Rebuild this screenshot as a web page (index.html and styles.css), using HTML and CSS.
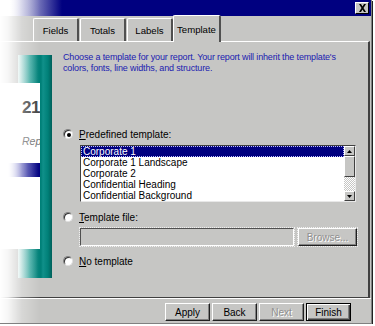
FILE: index.html
```html
<!DOCTYPE html>
<html>
<head>
<meta charset="utf-8">
<link rel="stylesheet" href="styles.css">
</head>
<body>
<div class="window">
  <div class="titlebar"><span class="close"><svg width="9" height="8" viewBox="0 0 9 8"><path d="M1 0h2l1.5 2.5L6 0h2L5.5 4 8 8H6L4.5 5.5 3 8H1l2.5-4z" fill="#000"/></svg></span></div>
  <div class="tabstrip">
    <div class="tab">Fields</div>
    <div class="tab">Totals</div>
    <div class="tab">Labels</div>
    <div class="tab active">Template</div>
  </div>
  <div class="panel">
    <div class="art">
      <div class="teal"></div>
      <div class="card">
        <div class="num">21</div>
        <div class="rep">Rep</div>
        <div class="bar"></div>
      </div>
    </div>
    <div class="content">
      <p class="desc">Choose a template for your report. Your report will inherit the template's<br>colors, fonts, line widths, and structure.</p>
      <div class="radio first"><span class="dot checked"></span><span class="lbl"><u>P</u>redefined template:</span></div>
      <div class="listbox">
        <div class="items">
          <div class="item sel">Corporate 1</div>
          <div class="item">Corporate 1 Landscape</div>
          <div class="item">Corporate 2</div>
          <div class="item">Confidential Heading</div>
          <div class="item">Confidential Background</div>
        </div>
        <div class="scroll">
          <div class="sbtn"><svg width="5" height="3" viewBox="0 0 5 3"><path d="M2.5 0L5 3H0z" fill="#000"/></svg></div>
          <div class="thumb"></div>
          <div class="track"></div>
          <div class="sbtn"><svg width="5" height="3" viewBox="0 0 5 3"><path d="M0 0h5L2.5 3z" fill="#000"/></svg></div>
        </div>
      </div>
      <div class="radio"><span class="dot"></span><span class="lbl"><u>T</u>emplate file:</span></div>
      <div class="filerow">
        <div class="field"></div>
        <div class="btn disabled browse">Browse...</div>
      </div>
      <div class="radio"><span class="dot"></span><span class="lbl"><u>N</u>o template</span></div>
    </div>
  </div>
  <div class="footer">
    <div class="btn">Apply</div>
    <div class="btn">Back</div>
    <div class="btn disabled">Next</div>
    <div class="btn default">Finish</div>
  </div>
  <div class="fade"></div>
</div>
</body>
</html>
```
FILE: styles.css
```css
html, body {
  margin: 0;
  padding: 0;
  background: #ffffff;
}
body {
  font-family: "Liberation Sans", Arial, sans-serif;
  font-size: 10px;
  color: #000;
}
.window {
  position: relative;
  width: 371px;
  height: 323px;
  background: #c6c6c4;
  border-right: 1px solid #808080;
  border-bottom: 1px solid #808080;
  box-shadow: 1px 1px 0 #202020;
  overflow: hidden;
}
.titlebar {
  height: 16px;
  background: linear-gradient(to right, #ffffff 0, #ffffff 10px, #000080 62px, #000080 100%);
  display: flex;
  justify-content: flex-end;
  align-items: center;
  padding-right: 2px;
}
.close {
  width: 12px;
  height: 10px;
  background: #c6c6c4;
  border-top: 1px solid #fff;
  border-left: 1px solid #fff;
  border-right: 1px solid #000;
  border-bottom: 1px solid #000;
  display: flex;
  align-items: center;
  justify-content: center;
}
.tabstrip {
  height: 25px;
  display: flex;
  align-items: flex-end;
  padding-left: 33px;
}
.tab {
  width: 43px;
  height: 21px;
  margin-right: 1px;
  border-top: 1px solid #fff;
  border-left: 1px solid #fff;
  border-right: 2px solid #505050;
  border-radius: 2px 2px 0 0;
  display: flex;
  align-items: center;
  justify-content: center;
  font-size: 9.6px;
  padding-top: 1px;
}
.tab.active {
  width: 45px;
  height: 24px;
  position: relative;
  top: 1px;
  padding-bottom: 1px;
  margin-left: -1px;
  background: #c6c6c4;
  z-index: 1;
}
.panel {
  height: 255px;
  border-top: 1px solid #fff;
  border-right: 2px solid #404040;
  border-bottom: 1px solid #404040;
  margin-right: 1px;
  display: flex;
}
.art {
  position: relative;
  width: 52px;
  flex: none;
}
.teal {
  position: absolute;
  left: 18px;
  top: 13px;
  width: 34px;
  height: 223px;
  background: linear-gradient(to right, #e8f4f2 0, #3aa8a0 12px, #008078 20px, #008078 23px, #10908a 25px, #008078 30px, #005f5a 34px);
}
.card {
  position: absolute;
  left: 0;
  top: 41px;
  width: 40px;
  height: 166px;
  background: #ffffff;
  overflow: hidden;
}
.num {
  position: absolute;
  left: 22px;
  top: 15px;
  font-size: 17px;
  font-weight: bold;
  color: #404040;
  letter-spacing: -0.5px;
}
.rep {
  position: absolute;
  left: 22px;
  top: 52px;
  font-size: 10.5px;
  font-style: italic;
  color: #707070;
  white-space: nowrap;
}
.bar {
  position: absolute;
  left: 8px;
  top: 80px;
  width: 32px;
  height: 14px;
  background: linear-gradient(to right, #ffffff 0, #b0b0e0 8px, #3030a0 20px, #000080 30px);
}
.content {
  flex: 1;
  padding: 10px 0 0 11px;
}
.desc {
  margin: 0;
  color: #2020b0;
  font-size: 9px;
  letter-spacing: -0.15px;
  line-height: 11px;
  white-space: nowrap;
}
.radio {
  display: flex;
  align-items: center;
  height: 12px;
  margin-top: 9px;
}
.radio.first {
  margin-top: 54px;
}
.dot {
  width: 8px;
  height: 8px;
  border-radius: 50%;
  background: #fff;
  border: 1px solid #808080;
  border-right-color: #e0e0e0;
  border-bottom-color: #e0e0e0;
  box-shadow: inset 1px 1px 0 #303030;
  position: relative;
  margin-right: 6px;
}
.dot.checked::after {
  content: "";
  position: absolute;
  left: 2.5px;
  top: 2.5px;
  width: 4px;
  height: 4px;
  border-radius: 50%;
  background: #000;
}
.lbl {
  font-size: 10px;
}
.listbox {
  margin: 5px 0 0 17px;
  width: 274px;
  height: 55px;
  background: #fff;
  border-top: 1px solid #404040;
  border-left: 1px solid #404040;
  border-right: 1px solid #e8e8e8;
  border-bottom: 1px solid #e8e8e8;
  display: flex;
}
.items {
  flex: 1;
}
.item {
  height: 11px;
  line-height: 11px;
  padding-left: 2px;
  font-size: 10px;
  white-space: nowrap;
}
.item.sel {
  background: #000080;
  color: #fff;
  outline: 1px dotted #c0c0ff;
  outline-offset: -1px;
}
.scroll {
  width: 11px;
  display: flex;
  flex-direction: column;
}
.sbtn, .thumb {
  background: #c6c6c4;
  border-top: 1px solid #fff;
  border-left: 1px solid #fff;
  border-right: 1px solid #404040;
  border-bottom: 1px solid #404040;
  box-sizing: border-box;
}
.sbtn {
  height: 10px;
  display: flex;
  align-items: center;
  justify-content: center;
}
.thumb {
  height: 21px;
}
.track {
  flex: 1;
  background: repeating-conic-gradient(#ffffff 0 25%, #c6c6c4 0 50%) 0 0 / 2px 2px;
}
.filerow {
  display: flex;
  margin: 5px 0 0 17px;
  height: 18px;
}
.field {
  width: 212px;
  height: 16px;
  border-top: 1px solid #505050;
  border-left: 1px solid #505050;
  border-right: 1px solid #fff;
  border-bottom: 1px solid #fff;
  outline: 1px dotted #f0f0f0;
  outline-offset: 0;
}
.btn {
  width: 43px;
  height: 16px;
  border-top: 1px solid #fff;
  border-left: 1px solid #fff;
  border-right: 1px solid #202020;
  border-bottom: 1px solid #202020;
  box-shadow: inset -1px -1px 0 #808080;
  display: flex;
  align-items: center;
  justify-content: center;
  font-size: 10px;
}
.btn.disabled {
  color: #909090;
  text-shadow: 1px 1px 0 #fff;
}
.browse {
  margin-left: 4px;
  width: 57px;
  outline: 1px dotted #f0f0f0;
}
.footer {
  height: 26px;
  border-top: 1px solid #fff;
  display: flex;
  align-items: center;
  justify-content: flex-end;
  gap: 2px;
  padding-right: 20px;
}
.btn.default {
  border: 1px solid #000;
  box-shadow: inset 1px 1px 0 #fff, inset -1px -1px 0 #404040, inset -2px -2px 0 #808080;
  width: 43px;
}
.fade {
  position: absolute;
  left: 0;
  top: 0;
  width: 48px;
  height: 100%;
  background: linear-gradient(to right, rgba(255,255,255,1) 0, rgba(255,255,255,0.85) 8px, rgba(255,255,255,0.3) 22px, rgba(255,255,255,0) 40px);
  pointer-events: none;
  z-index: 5;
}
```
